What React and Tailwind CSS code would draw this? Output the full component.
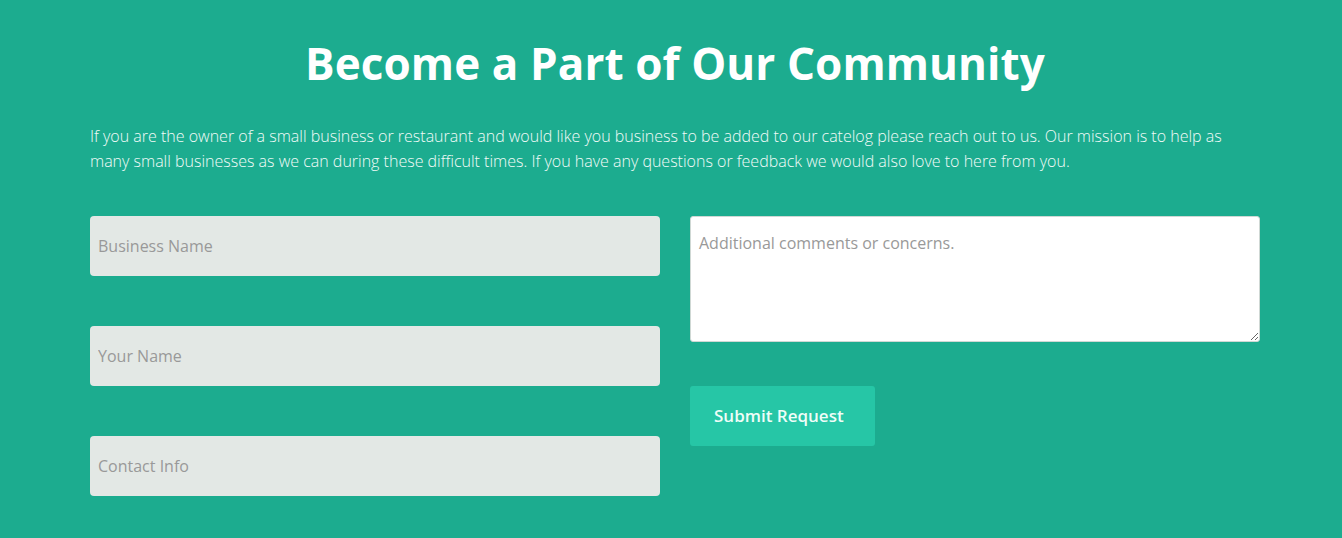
import React from 'react';

const App = () => {
    return (
        <div className="min-h-[538px] bg-[#1cac8f] text-white" style={{ fontFamily: '"Open Sans", sans-serif' }}>
            <div className="w-[1170px] ml-[90px] pt-[30px]">
                <h1 className="text-center text-[44px] leading-[66px] font-bold tracking-[0.1px]">Become a Part of Our Community</h1>
                <p className="mt-[28px] text-[16px] leading-[25px] font-light text-[#f2fbf8]">
                    If you are the owner of a small business or restaurant and would like you business to be added to our catelog please reach out to us. Our mission is to help as many small businesses as we can during these difficult times. If you have any questions or feedback we would also love to here from you.
                </p>
                <form className="mt-[42px] grid grid-cols-2 gap-[30px]" onSubmit={(e) => e.preventDefault()}>
                    <div className="flex flex-col gap-[50px]">
                        <input type="text" placeholder="Business Name" className="h-[60px] rounded bg-[#e3e8e5] px-2 text-[16px] text-gray-700 placeholder:text-[#999] outline-none" />
                        <input type="text" placeholder="Your Name" className="h-[60px] rounded bg-[#e3e8e5] px-2 text-[16px] text-gray-700 placeholder:text-[#999] outline-none" />
                        <input type="text" placeholder="Contact Info" className="h-[60px] rounded bg-[#e3e8e5] px-2 text-[16px] text-gray-700 placeholder:text-[#999] outline-none" />
                    </div>
                    <div className="flex flex-col items-start gap-[44px]">
                        <textarea placeholder="Additional comments or concerns." className="w-full h-[126px] rounded-[3px] border border-[#cfd8d4] bg-white px-2 pt-[14px] pb-2 text-[16px] text-gray-700 placeholder:text-[#999] outline-none" />
                        <button type="submit" className="h-[60px] w-[185px] rounded-[3px] bg-[#26c6a6] pl-[24px] text-left text-[17px] font-semibold text-[#eefdf8]">Submit Request</button>
                    </div>
                </form>
            </div>
        </div>
    );
};

export default App;
